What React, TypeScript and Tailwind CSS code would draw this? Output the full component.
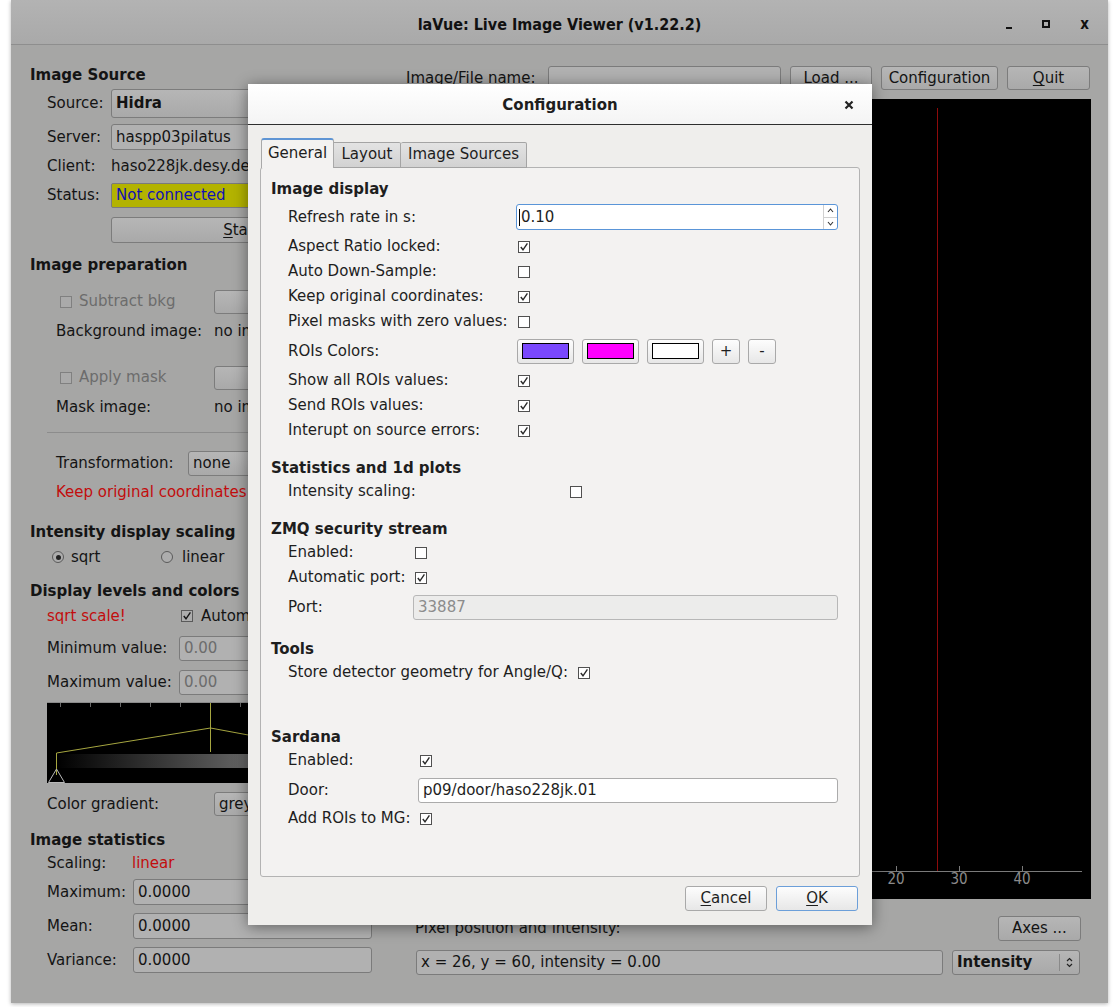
import clsx from "clsx";

// dimmed main window widgets
function DimBox({ className, children }: { className?: string; children?: React.ReactNode }) {
  return (
    <div className={clsx("flex items-center rounded-[3px] border border-[#7b7b7b] bg-[#b1b1b1] px-[4px]", className)}>
      {children}
    </div>
  );
}

function DimButton({ className, children }: { className?: string; children?: React.ReactNode }) {
  return (
    <div className={clsx("flex items-center justify-center rounded-[3px] border border-[#7c7c7c] bg-gradient-to-b from-[#b6b6b6] to-[#a9a9a9]", className)}>
      {children}
    </div>
  );
}

function Check({ on, light, disabled }: { on?: boolean; light?: boolean; disabled?: boolean }) {
  return (
    <span
      className={clsx(
        "inline-flex h-[12px] w-[12px] shrink-0 items-center justify-center border",
        light ? "border-[#505050] bg-white" : disabled ? "border-[#808080] bg-[#aaaaaa]" : "border-[#5a5a5a] bg-[#adadad]"
      )}
    >
      {on && (
        <svg width="10" height="10" viewBox="0 0 10 10">
          <path d="M1.8 5 L4 7.8 L8.4 1.4" fill="none" stroke={light ? "#2a2a2a" : "#151515"} strokeWidth="1.4" />
        </svg>
      )}
    </span>
  );
}

function Radio({ on }: { on?: boolean }) {
  return (
    <span className="inline-flex h-[12px] w-[12px] items-center justify-center rounded-full border border-[#5a5a5a] bg-[#adadad]">
      {on && <span className="h-[5px] w-[5px] rounded-full bg-[#222]" />}
    </span>
  );
}

function Heading({ children, className }: { children: React.ReactNode; className?: string }) {
  return <div className={clsx("flex h-[22px] items-center font-bold", className)}>{children}</div>;
}

function Histogram() {
  return (
    <svg width="325" height="81" className="block">
      <defs>
        <linearGradient id="gbar" x1="0" x2="1" y1="0" y2="0">
          <stop offset="0" stopColor="#000" />
          <stop offset="1" stopColor="#a6a6a6" />
        </linearGradient>
      </defs>
      <rect width="325" height="81" fill="#000" />
      <line x1="0" y1="0.5" x2="325" y2="0.5" stroke="#8a8a8a" />
      {[13, 43, 73, 103, 133, 193, 223, 253, 283, 313].map((x) => (
        <line key={x} x1={x + 0.5} y1="1" x2={x + 0.5} y2="5" stroke="#6a6a6a" />
      ))}
      <rect x="9" y="52" width="316" height="14" fill="url(#gbar)" />
      <line x1="163.5" y1="1" x2="163.5" y2="50" stroke="#a6a640" />
      <polyline points="9.5,51 163.5,26 325,56" fill="none" stroke="#a6a640" />
      <line x1="9.5" y1="51" x2="9.5" y2="73" stroke="#a6a640" />
      <polygon points="1.5,80.5 9.5,67 17.5,80.5" fill="none" stroke="#b8b8b8" />
    </svg>
  );
}

function Plot() {
  return (
    <svg width="676" height="800" className="block">
      <rect width="676" height="800" fill="#000" />
      <line x1="522.5" y1="9" x2="522.5" y2="772" stroke="#8e0b0b" />
      <line x1="40" y1="772.5" x2="667" y2="772.5" stroke="#7a7a7a" />
      {[481, 544, 607].map((x) => (
        <line key={x} x1={x + 0.5} y1="767" x2={x + 0.5} y2="772" stroke="#7a7a7a" />
      ))}
      {[
        [481, "20"],
        [544, "30"],
        [607, "40"],
      ].map(([x, t]) => (
        <text key={t} x={Number(x)} y="785" textAnchor="middle" fontFamily="DejaVu Sans Condensed, DejaVu Sans, sans-serif" fontSize="15" fill="#8a8a8a">
          {t}
        </text>
      ))}
    </svg>
  );
}

function LeftColumn() {
  return (
    <div className="flex w-[350px] shrink-0 flex-col pt-[19px]">
      <Heading>Image Source</Heading>
      <div className="mt-[3px] flex h-[29px] items-center pl-[17px]">
        <span className="w-[64px]">Source:</span>
        <DimButton className="h-[29px] w-[261px] !justify-start pl-[4px] font-bold">Hidra</DimButton>
      </div>
      <div className="mt-[6px] flex h-[26px] items-center pl-[17px]">
        <span className="w-[64px]">Server:</span>
        <DimBox className="h-[26px] w-[261px]">haspp03pilatus</DimBox>
      </div>
      <div className="mt-[4px] flex h-[25px] items-center pl-[17px]">
        <span className="w-[64px]">Client:</span>
        <span>haso228jk.desy.de</span>
      </div>
      <div className="mt-[4px] flex h-[25px] items-center pl-[17px]">
        <span className="w-[64px]">Status:</span>
        <div className="flex h-[25px] w-[261px] items-center rounded-[2px] border border-[#7b7b7b] bg-[#b3b300] px-[4px] text-[#1212b4]">
          Not connected
        </div>
      </div>
      <div className="mt-[9px] flex h-[26px] items-center pl-[81px]">
        <DimButton className="h-[26px] w-[261px]">
          <span className="underline decoration-1 underline-offset-2">S</span>tart
        </DimButton>
      </div>

      <Heading className="mt-[11px]">Image preparation</Heading>
      <div className="mt-[13px] flex h-[25px] items-center pl-[30px]">
        <Check disabled />
        <span className="ml-[7px] w-[135px] text-[#6c6c6c]">Subtract bkg</span>
        <DimButton className="h-[24px] w-[158px]" />
      </div>
      <div className="mt-[5px] flex h-[25px] items-center pl-[26px]">
        <span className="w-[158px]">Background image:</span>
        <span>no image</span>
      </div>
      <div className="mt-[21px] flex h-[25px] items-center pl-[30px]">
        <Check disabled />
        <span className="ml-[7px] w-[135px] text-[#6c6c6c]">Apply mask</span>
        <DimButton className="h-[24px] w-[158px]" />
      </div>
      <div className="mt-[5px] flex h-[25px] items-center pl-[26px]">
        <span className="w-[158px]">Mask image:</span>
        <span>no image</span>
      </div>
      <div className="ml-[17px] mt-[12px] h-px w-[325px] bg-[#8c8c8c]" />
      <div className="mt-[18px] flex h-[25px] items-center pl-[26px]">
        <span className="w-[132px]">Transformation:</span>
        <DimButton className="h-[25px] w-[184px] !justify-start pl-[4px]">none</DimButton>
      </div>
      <div className="mt-[4px] flex h-[24px] items-center pl-[26px] text-[#c20d0d]">Keep original coordinates!</div>

      <Heading className="mt-[17px]">Intensity display scaling</Heading>
      <div className="mt-[2px] flex h-[24px] items-center pl-[22px]">
        <Radio on />
        <span className="ml-[7px] w-[90px]">sqrt</span>
        <Radio />
        <span className="ml-[9px]">linear</span>
      </div>

      <Heading className="mt-[11px]">Display levels and colors</Heading>
      <div className="mt-[2px] flex h-[24px] items-center pl-[17px]">
        <span className="w-[134px] text-[#c20d0d]">sqrt scale!</span>
        <Check on />
        <span className="ml-[8px]">Automatic levels</span>
      </div>
      <div className="mt-[8px] flex h-[25px] items-center pl-[17px]">
        <span className="w-[132px]">Minimum value:</span>
        <DimBox className="h-[25px] w-[193px] text-[#6c6c6c]">0.00</DimBox>
      </div>
      <div className="mt-[9px] flex h-[25px] items-center pl-[17px]">
        <span className="w-[132px]">Maximum value:</span>
        <DimBox className="h-[25px] w-[193px] text-[#6c6c6c]">0.00</DimBox>
      </div>
      <div className="ml-[17px] mt-[7px]">
        <Histogram />
      </div>
      <div className="mt-[9px] flex h-[24px] items-center pl-[17px]">
        <span className="w-[167px]">Color gradient:</span>
        <DimButton className="h-[24px] w-[158px] !justify-start pl-[4px]">grey</DimButton>
      </div>

      <Heading className="mt-[13px]">Image statistics</Heading>
      <div className="flex h-[24px] items-center pl-[17px]">
        <span className="w-[85px]">Scaling:</span>
        <span className="text-[#c20d0d]">linear</span>
      </div>
      {["Maximum:", "Mean:", "Variance:"].map((l, i) => (
        <div key={l} className={clsx("flex h-[26px] items-center pl-[17px]", i === 0 ? "mt-[4px]" : "mt-[8px]")}>
          <span className="w-[86px]">{l}</span>
          <DimBox className="h-[26px] w-[239px]">0.0000</DimBox>
        </div>
      ))}
    </div>
  );
}

function RightColumn() {
  return (
    <div className="ml-[26px] flex w-[685px] flex-col">
      <div className="mt-[21px] flex h-[24px] items-center">
        <span className="w-[142px]">Image/File name:</span>
        <DimBox className="h-[24px] w-[233px]" />
        <DimButton className="ml-[9px] h-[24px] w-[82px]">Load ...</DimButton>
        <DimButton className="ml-[9px] h-[24px] w-[117px]">Configuration</DimButton>
        <DimButton className="ml-[9px] h-[24px] w-[83px]">
          <span className="underline decoration-1 underline-offset-2">Q</span>uit
        </DimButton>
      </div>
      <div className="ml-[9px] mt-[9px]">
        <Plot />
      </div>
      <div className="mt-[17px] flex h-[25px] items-center justify-between pl-[9px] pr-[10px]">
        <span>Pixel position and intensity:</span>
        <DimButton className="h-[25px] w-[83px]">Axes ...</DimButton>
      </div>
      <div className="mt-[9px] flex h-[25px] items-center pl-[10px]">
        <DimBox className="h-[25px] w-[527px]">x = 26, y = 60, intensity = 0.00</DimBox>
        <DimButton className="ml-[9px] h-[25px] w-[128px] !justify-between pl-[4px] pr-[6px]">
          <span className="font-bold">Intensity</span>
          <span className="flex h-[17px] items-center border-l border-[#8a8a8a] pl-[6px]">
            <svg width="7" height="11" viewBox="0 0 7 11">
              <path d="M1 4 L3.5 1.5 L6 4 M1 7 L3.5 9.5 L6 7" fill="none" stroke="#222" strokeWidth="1.2" />
            </svg>
          </span>
        </DimButton>
      </div>
    </div>
  );
}

// dialog widgets
function LBtn({ className, children }: { className?: string; children?: React.ReactNode }) {
  return (
    <div
      className={clsx(
        "flex items-center justify-center rounded-[3px] border border-[#a9a9a9] bg-gradient-to-b from-[#fdfdfd] to-[#e7e7e7]",
        className
      )}
    >
      {children}
    </div>
  );
}

function Row({ label, w, on, className }: { label: string; w: number; on?: boolean; className?: string }) {
  return (
    <div className={clsx("flex h-[25px] items-center pl-[17px]", className)}>
      <span style={{ width: w }} className="shrink-0">
        {label}
      </span>
      <Check light on={on} />
    </div>
  );
}

function Swatch({ color }: { color: string }) {
  return (
    <LBtn className="h-[25px] w-[57px]">
      <span className="h-[16px] w-[47px] border border-black" style={{ background: color }} />
    </LBtn>
  );
}

function ConfigDialog() {
  return (
    <div className="absolute left-[248px] top-[84px] flex h-[841px] w-[624px] flex-col bg-[#efeeec] text-[#1e1e1e] shadow-[0_2px_14px_rgba(0,0,0,0.45)]">
      <div className="relative flex h-[41px] items-center justify-center border-b border-[#2e2e2e] bg-gradient-to-b from-white to-[#f4f4f4]">
        <span className="pt-[2px] font-bold">Configuration</span>
        <svg width="10" height="10" viewBox="0 0 10 10" className="absolute right-[18px] top-[16px]">
          <path d="M1.5 1.5 L8.5 8.5 M8.5 1.5 L1.5 8.5" stroke="#222" strokeWidth="2.2" />
        </svg>
      </div>

      <div className="px-[12px] pt-[13px]">
        <div className="relative z-10 -mb-px flex h-[30px] items-end pl-[1px]">
          <div className="flex h-[30px] w-[73px] items-center justify-center rounded-t-[3px] border border-b-0 border-[#a9a9a9] border-t-[2px] border-t-[#5f95d4] bg-[#f3f2f1] pb-[1px]">
            General
          </div>
          <div className="flex h-[26px] w-[67px] items-center justify-center rounded-tr-[2px] border border-l-0 border-[#a4a4a4] bg-gradient-to-b from-[#e3e3e3] to-[#d2d2d2] pb-[2px]">
            Layout
          </div>
          <div className="flex h-[26px] w-[126px] items-center justify-center rounded-t-[2px] border border-l-0 border-[#a4a4a4] bg-gradient-to-b from-[#e3e3e3] to-[#d2d2d2] pb-[2px]">
            Image Sources
          </div>
        </div>
        <div className="flex h-[710px] w-[600px] flex-col rounded-[3px] border border-[#b3b3b3] bg-[#f3f2f1] pl-[10px] pt-[10px]">
          <Heading>Image display</Heading>
          <div className="mt-[4px] flex h-[26px] items-center pl-[17px]">
            <span className="w-[228px] shrink-0">Refresh rate in s:</span>
            <div className="flex h-[26px] w-[322px] items-center rounded-[3px] border border-[#5a95d8] bg-white">
              <span className="ml-[2px] h-[17px] w-px bg-black" />
              <span className="ml-[1px] flex-1">0.10</span>
              <div className="flex h-full w-[14px] flex-col border-l border-[#d0d0d0]">
                <div className="flex flex-1 items-center justify-center border-b border-[#d0d0d0]">
                  <svg width="7" height="5" viewBox="0 0 7 5">
                    <path d="M1 4 L3.5 1 L6 4" fill="none" stroke="#333" strokeWidth="1.1" />
                  </svg>
                </div>
                <div className="flex flex-1 items-center justify-center">
                  <svg width="7" height="5" viewBox="0 0 7 5">
                    <path d="M1 1 L3.5 4 L6 1" fill="none" stroke="#333" strokeWidth="1.1" />
                  </svg>
                </div>
              </div>
            </div>
          </div>
          <Row className="mt-[4px]" label="Aspect Ratio locked:" w={230} on />
          <Row label="Auto Down-Sample:" w={230} />
          <Row label="Keep original coordinates:" w={230} on />
          <Row label="Pixel masks with zero values:" w={230} />
          <div className="flex h-[34px] items-center pl-[17px]">
            <span className="w-[229px] shrink-0">ROIs Colors:</span>
            <div className="flex gap-[8px]">
              <Swatch color="#7a48fe" />
              <Swatch color="#ff00ff" />
              <Swatch color="#ffffff" />
              <LBtn className="h-[25px] w-[28px]">+</LBtn>
              <LBtn className="h-[25px] w-[28px]">-</LBtn>
            </div>
          </div>
          <Row label="Show all ROIs values:" w={230} on />
          <Row label="Send ROIs values:" w={230} on />
          <Row label="Interupt on source errors:" w={230} on />

          <Heading className="mt-[14px]">Statistics and 1d plots</Heading>
          <Row label="Intensity scaling:" w={282} />

          <Heading className="mt-[14px]">ZMQ security stream</Heading>
          <Row label="Enabled:" w={127} />
          <Row label="Automatic port:" w={127} on />
          <div className="mt-[5px] flex h-[25px] items-center pl-[17px]">
            <span className="w-[125px] shrink-0">Port:</span>
            <div className="flex h-[25px] w-[425px] items-center rounded-[3px] border border-[#b7b7b7] bg-[#ececeb] px-[4px] text-[#8c8c8c]">
              33887
            </div>
          </div>

          <Heading className="mt-[18px]">Tools</Heading>
          <Row label="Store detector geometry for Angle/Q:" w={290} on />

          <Heading className="mt-[41px]">Sardana</Heading>
          <Row label="Enabled:" w={132} on />
          <div className="mt-[5px] flex h-[25px] items-center pl-[17px]">
            <span className="w-[130px] shrink-0">Door:</span>
            <div className="flex h-[25px] w-[420px] items-center rounded-[3px] border border-[#ababab] bg-white px-[4px]">
              p09/door/haso228jk.01
            </div>
          </div>
          <Row className="mt-[3px]" label="Add ROIs to MG:" w={132} on />
        </div>
        <div className="mt-[9px] flex w-[600px] justify-end gap-[9px] pr-[2px]">
          <LBtn className="h-[25px] w-[82px]">
            <span className="underline decoration-1 underline-offset-2">C</span>ancel
          </LBtn>
          <LBtn className="h-[25px] w-[82px] !border-[#6c9fd9]">
            <span className="underline decoration-1 underline-offset-2">O</span>K
          </LBtn>
        </div>
      </div>
    </div>
  );
}

export default function App() {
  return (
    <div className="relative h-[1007px] w-[1114px] overflow-hidden bg-white font-['DejaVu_Sans',sans-serif] text-[15px] leading-none text-[#141414]">
      <div className="ml-[11px] flex h-[1003px] w-[1097px] flex-col shadow-[0_1px_4px_rgba(0,0,0,0.3)]">
        <div className="relative flex h-[45px] shrink-0 items-center justify-center border-b border-[#8e8e8e] bg-gradient-to-b from-[#b3b3b3] to-[#a9a9a9]">
          <span className="pt-[5px] font-['DejaVu_Sans_Condensed','DejaVu_Sans',sans-serif] text-[16px] font-bold text-[#111]">
            laVue: Live Image Viewer (v1.22.2)
          </span>
          <div className="absolute right-[19px] top-[19px] flex h-[10px] items-center gap-[30px]">
            <span className="mt-[7px] h-[2px] w-[6px] bg-[#111]" />
            <span className="h-[8px] w-[8px] border-[2px] border-[#111]" />
            <span className="pt-[1px] font-['DejaVu_Sans_Condensed','DejaVu_Sans',sans-serif] text-[15px] font-bold text-[#111]">x</span>
          </div>
        </div>
        <div className="flex flex-1 bg-[#a6a6a5] pl-[19px]">
          <LeftColumn />
          <RightColumn />
        </div>
      </div>
      <ConfigDialog />
    </div>
  );
}
